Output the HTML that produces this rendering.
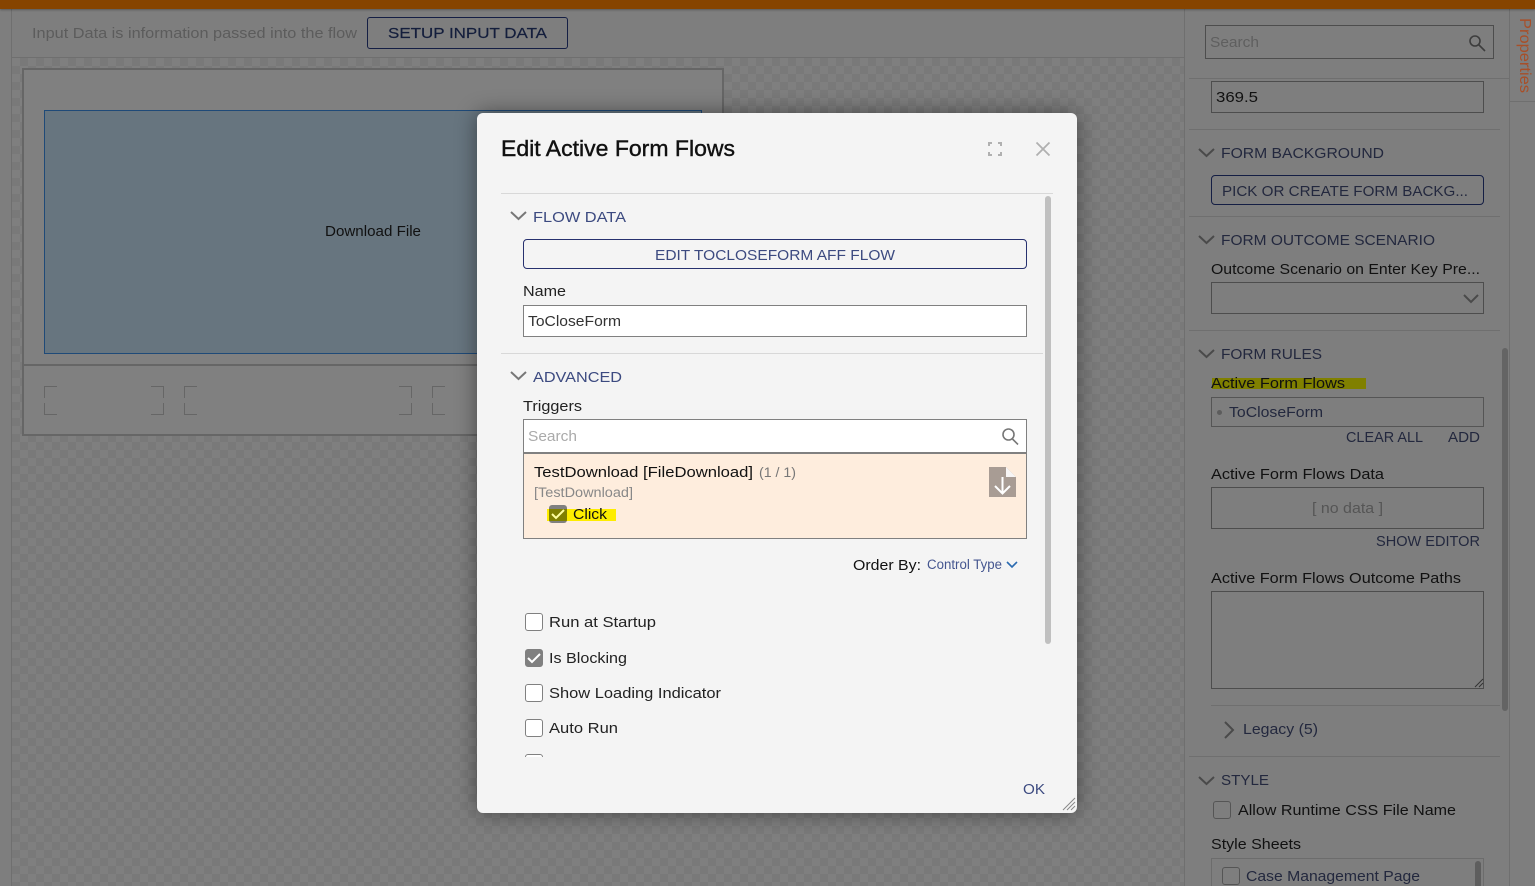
<!DOCTYPE html>
<html lang="en"><head><meta charset="utf-8"><title>Edit Active Form Flows</title>
<style>
html,body{margin:0;padding:0;width:1535px;height:886px;overflow:hidden;background:#7e7e7e}
#w{position:relative;width:1535px;height:886px;overflow:hidden}
.a{position:absolute;box-sizing:border-box}
.ln{position:absolute;height:1px;background:#6f6f6f}
.bx{position:absolute;box-sizing:border-box;border:1px solid #4d4d4d}
.cb{position:absolute;box-sizing:border-box;width:18px;height:18px;border:1.5px solid #808080;border-radius:3px;background:#fff}
.cbd{border-color:#555;background:#7e7e7e}
.br{position:absolute;box-sizing:border-box;width:13px;height:12px;border:0 solid #666}
svg.o{position:absolute;left:0;top:0;z-index:20}
text{font-family:"Liberation Sans",sans-serif;font-size:15px;fill:#222}
.navy{fill:#3c4a80}.dnavy{fill:#23283e}.blk{fill:#111}.pl{fill:#aaa}.g{fill:#888}
</style></head><body><div id="w">

<div class="a" style="left:0;top:0;width:1535px;height:9px;background:#864400;box-shadow:0 1px 2px rgba(0,0,0,.3);z-index:3"></div>
<div class="a" style="left:11px;top:9px;width:1px;height:877px;background:#6f6f6f"></div>
<div class="a" style="left:12px;top:58px;width:1172px;height:828px;background:repeating-conic-gradient(#797979 0 25%,#7f7f7f 0 50%) 0 0/16px 16px"></div>
<div class="ln" style="left:12px;top:57px;width:1172px"></div>
<div class="bx" style="left:367px;top:17px;width:201px;height:32px;border:1.5px solid #141e44;border-radius:3px"></div>

<div class="a" style="left:22px;top:68px;width:702px;height:368px;background:#808080;border:2px solid #666"></div>
<div class="a" style="left:22px;top:364px;width:702px;height:2px;background:#666"></div>
<div class="a" style="left:44px;top:110px;width:658px;height:244px;background:#67757f;border:1px solid #1f4a78"></div>

<div class="br" style="left:44px;top:386px;border-width:1px 0 0 1px"></div>
<div class="br" style="left:44px;top:403px;border-width:0 0 1px 1px"></div>
<div class="br" style="left:151px;top:386px;border-width:1px 1px 0 0"></div>
<div class="br" style="left:151px;top:403px;border-width:0 1px 1px 0"></div>
<div class="br" style="left:184px;top:386px;border-width:1px 0 0 1px"></div>
<div class="br" style="left:184px;top:403px;border-width:0 0 1px 1px"></div>
<div class="br" style="left:399px;top:386px;border-width:1px 1px 0 0"></div>
<div class="br" style="left:399px;top:403px;border-width:0 1px 1px 0"></div>
<div class="br" style="left:432px;top:386px;border-width:1px 0 0 1px"></div>
<div class="br" style="left:432px;top:403px;border-width:0 0 1px 1px"></div>

<!-- right panel -->
<div class="a" style="left:1184px;top:9px;width:1px;height:877px;background:#6f6f6f"></div>
<div class="a" style="left:1509px;top:9px;width:1px;height:877px;background:#6f6f6f"></div>
<div class="ln" style="left:1510px;top:101px;width:25px"></div>
<div class="bx" style="left:1205px;top:25px;width:289px;height:34px"></div>
<div class="ln" style="left:1189px;top:78px;width:320px"></div>
<div class="bx" style="left:1211px;top:81px;width:273px;height:32px"></div>
<div class="ln" style="left:1189px;top:129px;width:311px"></div>
<div class="bx" style="left:1211px;top:175px;width:273px;height:30px;border-color:#141e44;border-radius:4px"></div>
<div class="ln" style="left:1189px;top:216px;width:311px"></div>
<div class="bx" style="left:1211px;top:282px;width:273px;height:32px"></div>
<div class="ln" style="left:1189px;top:330px;width:311px"></div>
<div class="a" style="left:1212px;top:378px;width:154px;height:11px;background:#808000"></div>
<div class="bx" style="left:1211px;top:397px;width:273px;height:30px;border-color:#555"></div>
<div class="a" style="left:1217px;top:410px;width:5px;height:5px;border-radius:50%;background:#5c5c5c"></div>
<div class="bx" style="left:1211px;top:487px;width:273px;height:42px"></div>
<div class="bx" style="left:1211px;top:591px;width:273px;height:98px"></div>
<div class="a" style="left:1502px;top:348px;width:6px;height:363px;border-radius:3px;background:#646464"></div>
<div class="ln" style="left:1211px;top:705px;width:289px"></div>
<div class="ln" style="left:1189px;top:756px;width:311px"></div>
<div class="cb cbd" style="left:1213px;top:801px"></div>
<div class="bx" style="left:1211px;top:858px;width:273px;height:28px;border-color:#6c6c6c;border-bottom:0"></div>
<div class="cb cbd" style="left:1222px;top:867px"></div>
<div class="a" style="left:1475px;top:861px;width:6px;height:25px;border-radius:3px 3px 0 0;background:#5e5e5e"></div>

<!-- modal -->
<div class="a" style="left:477px;top:113px;width:600px;height:700px;background:#f4f4f4;border-radius:6px;box-shadow:0 0 22px rgba(0,0,0,.45);z-index:10">
  <div class="a" style="left:24px;top:80px;width:552px;height:1px;background:#d8d8d8"></div>
  <div class="a" style="left:568px;top:83px;width:6px;height:448px;border-radius:3px;background:#c0c0c0"></div>
  <div class="a" style="left:46px;top:126px;width:504px;height:30px;border:1.5px solid #27316f;border-radius:4px"></div>
  <div class="a" style="left:46px;top:192px;width:504px;height:32px;background:#fff;border:1px solid #808080"></div>
  <div class="a" style="left:24px;top:240px;width:542px;height:1px;background:#d8d8d8"></div>
  <div class="a" style="left:46px;top:306px;width:504px;height:34px;background:#fff;border:1px solid #808080"></div>
  <div class="a" style="left:46px;top:339px;width:504px;height:87px;background:#feeddd;border:1px solid #808080;border-top:2px solid #808080"></div>
  <div class="a" style="left:72px;top:392px;width:18px;height:18px;border-radius:3px;background:#808080"></div>
  <div class="a" style="left:70px;top:396px;width:69px;height:12px;background:#ffff00;mix-blend-mode:multiply"></div>
  <div class="cb" style="left:48px;top:500px"></div>
  <div class="cb" style="left:48px;top:536px;background:#808080"></div>
  <div class="cb" style="left:48px;top:571px"></div>
  <div class="cb" style="left:48px;top:606px"></div>
  <div class="a" style="left:48px;top:641px;width:18px;height:3px;overflow:hidden"><div class="cb" style="left:0;top:0"></div></div>
</div>

<svg class="o" width="1535" height="886" viewBox="0 0 1535 886" xmlns="http://www.w3.org/2000/svg">
<!-- left -->
<text x="32" y="38" textLength="325" lengthAdjust="spacingAndGlyphs" style="fill:#5c5c5c">Input Data is information passed into the flow</text>
<text x="388" y="38" textLength="159" lengthAdjust="spacingAndGlyphs" style="fill:#141e3c;stroke:#141e3c;stroke-width:.2">SETUP INPUT DATA</text>
<text x="325" y="236" textLength="96" lengthAdjust="spacingAndGlyphs" class="blk" style="font-size:14.5px">Download File</text>

<!-- right panel -->
<text x="1210" y="47" textLength="49" lengthAdjust="spacingAndGlyphs" style="fill:#5f5f5f">Search</text>
<g fill="none" stroke="#3d3d3d" stroke-width="1.6"><circle cx="1475" cy="41" r="5"/><path d="M1479 45l6 6"/></g>
<text transform="translate(1520 18) rotate(90)" textLength="75" lengthAdjust="spacingAndGlyphs" style="fill:#a84f28;font-size:15.5px">Properties</text>
<text x="1216" y="102" textLength="42" lengthAdjust="spacingAndGlyphs" class="blk">369.5</text>
<g fill="none" stroke="#4a4a4a" stroke-width="2">
<path d="M1199 149l7.500 7 7.500-7M1199 236l7.500 7 7.500-7M1199 350l7.500 7 7.500-7M1199 777l7.500 7 7.500-7M1464 295l7 7 7-7M1225 722l8 8-8 8"/>
</g>
<text x="1221" y="158" textLength="163" lengthAdjust="spacingAndGlyphs" class="dnavy">FORM BACKGROUND</text>
<text x="1222" y="196" textLength="246" lengthAdjust="spacingAndGlyphs" class="dnavy">PICK OR CREATE FORM BACKG...</text>
<text x="1221" y="245" textLength="214" lengthAdjust="spacingAndGlyphs" class="dnavy">FORM OUTCOME SCENARIO</text>
<text x="1211" y="274" textLength="269" lengthAdjust="spacingAndGlyphs" class="blk">Outcome Scenario on Enter Key Pre...</text>
<text x="1221" y="359" textLength="101" lengthAdjust="spacingAndGlyphs" class="dnavy">FORM RULES</text>
<text x="1211" y="388" textLength="134" lengthAdjust="spacingAndGlyphs" class="blk">Active Form Flows</text>
<text x="1229" y="417" textLength="94" lengthAdjust="spacingAndGlyphs" class="dnavy">ToCloseForm</text>
<text x="1346" y="442" textLength="77" lengthAdjust="spacingAndGlyphs" class="dnavy">CLEAR ALL</text>
<text x="1448" y="442" textLength="32" lengthAdjust="spacingAndGlyphs" class="dnavy">ADD</text>
<text x="1211" y="479" textLength="173" lengthAdjust="spacingAndGlyphs" class="blk">Active Form Flows Data</text>
<text x="1312" y="513" textLength="71" lengthAdjust="spacingAndGlyphs" style="fill:#555">[ no data ]</text>
<text x="1376" y="546" textLength="104" lengthAdjust="spacingAndGlyphs" class="dnavy">SHOW EDITOR</text>
<text x="1211" y="583" textLength="250" lengthAdjust="spacingAndGlyphs" class="blk">Active Form Flows Outcome Paths</text>
<path d="M1475 687l8-8M1479 687l4-4" stroke="#333" stroke-width="1" fill="none"/>
<text x="1243" y="734" textLength="75" lengthAdjust="spacingAndGlyphs" class="dnavy">Legacy (5)</text>
<text x="1221" y="785" textLength="48" lengthAdjust="spacingAndGlyphs" class="dnavy">STYLE</text>
<text x="1238" y="815" textLength="218" lengthAdjust="spacingAndGlyphs" class="blk">Allow Runtime CSS File Name</text>
<text x="1211" y="849" textLength="90" lengthAdjust="spacingAndGlyphs" class="blk">Style Sheets</text>
<text x="1246" y="881" textLength="174" lengthAdjust="spacingAndGlyphs" class="dnavy">Case Management Page</text>

<!-- modal -->
<text x="501" y="156" textLength="234" lengthAdjust="spacingAndGlyphs" style="font-size:22px;fill:#111;stroke:#111;stroke-width:.4">Edit Active Form Flows</text>
<path d="M989 146v-3h3M998 143h3v3M1001 152v3h-3M992 155h-3v-3" fill="none" stroke="#b0b0b0" stroke-width="2"/>
<path d="M1036.500 142.500l13 13M1049.500 142.500l-13 13" fill="none" stroke="#b0b0b0" stroke-width="1.800"/>
<g fill="none" stroke="#777" stroke-width="2"><path d="M511 212l7.500 7 7.500-7M511 372l7.500 7 7.500-7"/></g>
<text x="533" y="222" textLength="93" lengthAdjust="spacingAndGlyphs" class="navy">FLOW DATA</text>
<text x="655" y="260" textLength="240" lengthAdjust="spacingAndGlyphs" class="navy">EDIT TOCLOSEFORM AFF FLOW</text>
<text x="523" y="296" textLength="43" lengthAdjust="spacingAndGlyphs">Name</text>
<text x="528" y="326" textLength="93" lengthAdjust="spacingAndGlyphs" style="fill:#333">ToCloseForm</text>
<text x="533" y="382" textLength="89" lengthAdjust="spacingAndGlyphs" class="navy">ADVANCED</text>
<text x="523" y="411" textLength="59" lengthAdjust="spacingAndGlyphs">Triggers</text>
<text x="528" y="441" textLength="49" lengthAdjust="spacingAndGlyphs" class="pl">Search</text>
<g fill="none" stroke="#777" stroke-width="1.600"><circle cx="1008.500" cy="434.500" r="5.500"/><path d="M1012.500 439l5.500 5.500"/></g>
<text x="534" y="477" textLength="219" lengthAdjust="spacingAndGlyphs" class="blk">TestDownload [FileDownload]</text>
<text x="759" y="477" textLength="37" lengthAdjust="spacingAndGlyphs" style="font-size:13.500px;fill:#777">(1 / 1)</text>
<text x="534" y="497" textLength="99" lengthAdjust="spacingAndGlyphs" style="font-size:13.500px;fill:#888">[TestDownload]</text>
<path d="M552 514l4 4 8-8" fill="none" stroke="#ffffa0" stroke-width="2"/>
<text x="573" y="519" textLength="34" lengthAdjust="spacingAndGlyphs" class="blk">Click</text>
<path d="M989 467h17l10 10v20h-27z" fill="#a89c94"/>
<path d="M1006 467l10 10h-10z" fill="#fff" opacity=".9"/>
<path d="M1002.500 477v16M995 486l7.500 7.500 7.500-7.500" fill="none" stroke="#fff" stroke-width="2"/>
<text x="853" y="570" textLength="68" lengthAdjust="spacingAndGlyphs" class="blk">Order By:</text>
<text x="927" y="569" textLength="75" lengthAdjust="spacingAndGlyphs" style="font-size:13.500px;fill:#44558f">Control Type</text>
<path d="M1007 562l5 5 5-5" fill="none" stroke="#2a6ab0" stroke-width="1.600"/>
<text x="549" y="627" textLength="107" lengthAdjust="spacingAndGlyphs">Run at Startup</text>
<path d="M528 658l4 4 8-8" fill="none" stroke="#fff" stroke-width="2"/>
<text x="549" y="663" textLength="78" lengthAdjust="spacingAndGlyphs">Is Blocking</text>
<text x="549" y="698" textLength="172" lengthAdjust="spacingAndGlyphs">Show Loading Indicator</text>
<text x="549" y="733" textLength="69" lengthAdjust="spacingAndGlyphs">Auto Run</text>
<text x="1023" y="794" textLength="22" lengthAdjust="spacingAndGlyphs" class="navy">OK</text>
<path d="M1063 810l12-12M1067 810l8-8M1071 810l4-4" fill="none" stroke="#888" stroke-width="1"/>
</svg>
</div></body></html>
